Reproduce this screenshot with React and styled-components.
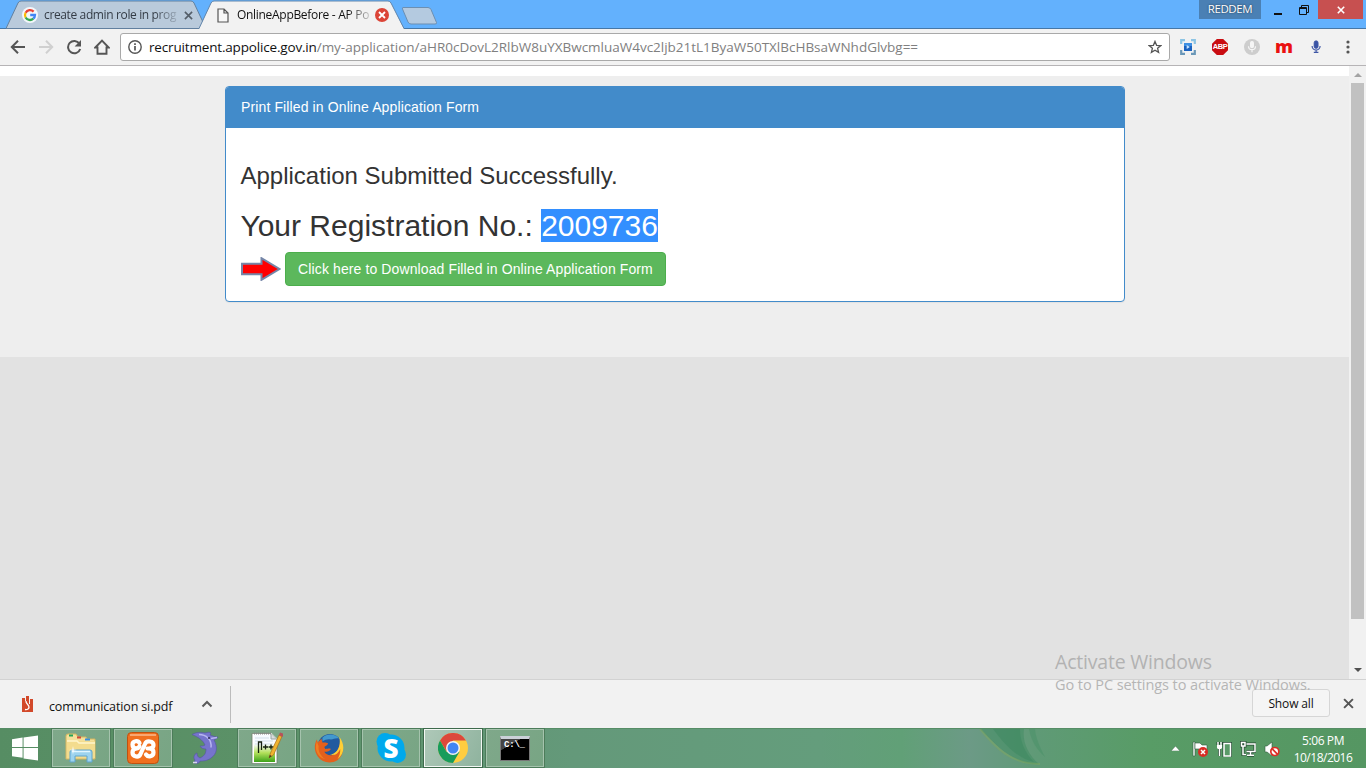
import React from "react";
import styled, { createGlobalStyle, css } from "styled-components";

const Global = createGlobalStyle`
  * { box-sizing: border-box; }
  html, body { margin: 0; padding: 0; overflow: hidden; }
  svg { display: block; flex: none; }
`;

const ui = `"Open Sans", "Noto Sans", sans-serif`;
const page = `"Liberation Sans", Arial, sans-serif`;

const Desktop = styled.div`
  position: relative;
  display: flex;
  flex-direction: column;
  width: 1366px;
  height: 768px;
  overflow: hidden;
  background: #f2f2f2;
  font-family: ${ui};
`;

const Label = styled.span`
  font-size: ${(p) => p.$size}px;
  letter-spacing: ${(p) => p.$track || 0}px;
  color: ${(p) => p.$color || "#111"};
  white-space: nowrap;
`;

/* ---------- tab strip ---------- */
const TabStrip = styled.header`
  display: flex;
  flex: none;
  height: 29px;
  padding-left: 6px;
  background: #63b1fd;
  border-bottom: 1px solid #4677a6;
`;

const Tab = styled.div`
  position: relative;
  display: flex;
  align-items: center;
  width: ${(p) => p.$w}px;
  height: 29px;
  margin-left: ${(p) => p.$overlap || 0}px;
  padding: 1px 0 0 16px;
`;

const TabShape = styled.svg`
  position: absolute;
  left: 0;
  top: 0;
`;

const TabIcon = styled.div`
  position: relative;
  display: flex;
  justify-content: center;
  width: 16px;
`;

const TabTitle = styled.div`
  position: relative;
  width: 134px;
  margin-left: 6px;
  line-height: 20px;
  display: flex;
  mask-image: linear-gradient(90deg, #000 82%, rgba(0, 0, 0, 0.15) 100%);
`;

const TabClose = styled.div`
  position: relative;
  margin-left: ${(p) => p.$gap}px;
`;

const NewTab = styled.div`
  padding: 7px 0 0;
  margin-left: 1px;
`;

const WindowControls = styled.div`
  display: flex;
  margin-left: auto;
  margin-right: 3px;
  height: 19px;
`;

const UserBadge = styled.div`
  width: 62px;
  height: 19px;
  background: #4a80b4;
  display: flex;
  justify-content: center;
  line-height: 18px;
  text-shadow: 0 0 2px #234;
`;

const ControlButton = styled.div`
  display: flex;
  align-items: center;
  justify-content: center;
  width: ${(p) => p.$w}px;
  height: 19px;
  background: ${(p) => p.$bg || "transparent"};
`;

/* ---------- toolbar ---------- */
const Toolbar = styled.nav`
  display: flex;
  flex: none;
  align-items: center;
  height: 37px;
  padding: 0 7px 0 10px;
  background: #f2f2f2;
  border-bottom: 1px solid #b6b4b6;
`;

const NavButtons = styled.div`
  display: flex;
  gap: 12px;
  width: 110px;
`;

const AddressBar = styled.div`
  display: flex;
  align-items: center;
  width: 1050px;
  height: 28px;
  padding: 0 7px;
  background: #fff;
  border: 1px solid #a9a9a9;
  border-radius: 3px;
`;

const UrlText = styled.div`
  flex: 1;
  display: flex;
  margin-left: 7px;
  line-height: 24px;
`;

const Extensions = styled.div`
  display: flex;
  align-items: center;
  gap: 16px;
  margin-left: 10px;
`;

const MenuButton = styled.div`
  margin-left: auto;
  margin-right: 9px;
`;

/* ---------- page ---------- */
const Viewport = styled.main`
  display: flex;
  flex: none;
  height: 613px;
`;

const PageBody = styled.div`
  width: 1349px;
  background: #e2e2e2;
  font-family: ${page};
`;

const TopStrip = styled.div`
  height: 10px;
  background: #fff;
`;

const Content = styled.section`
  height: 281px;
  padding: 10px 0 0 225px;
  background: #eee;
`;

const Panel = styled.div`
  width: 900px;
  height: 216px;
  background: #fff;
  border: 1px solid #428bca;
  border-radius: 4px;
  overflow: hidden;
  box-shadow: 0 1px 1px rgba(0, 0, 0, 0.05);
`;

const PanelHeading = styled.div`
  height: 41px;
  padding: 10px 15px;
  background: #428bca;
  color: #fff;
  font-size: 14px;
  letter-spacing: 0.12px;
  line-height: 20px;
`;

const PanelBody = styled.div`
  padding: 35px 15px 0;
  color: #333;
`;

const Status = styled.h3`
  margin: 0 0 0 -0.5px;
  font-size: 24px;
  line-height: 26px;
  font-weight: 400;
`;

const Registration = styled.h2`
  margin: 20px 0 0 -0.6px;
  font-size: 30px;
  line-height: 33px;
  font-weight: 400;
`;

const Selected = styled.span`
  display: inline-block;
  height: 33px;
  background: #338fff;
  color: #fff;
`;

const DownloadRow = styled.div`
  display: flex;
  align-items: center;
  gap: 4px;
  margin-top: 10px;
`;

const DownloadButton = styled.button`
  width: 381px;
  height: 34px;
  padding: 0;
  border: 1px solid #4cae4c;
  border-radius: 4px;
  background: #5cb85c;
  color: #fff;
  font: 14px/20px ${page};
  letter-spacing: 0.11px;
`;

const Scrollbar = styled.div`
  display: flex;
  flex-direction: column;
  align-items: center;
  justify-content: space-between;
  width: 17px;
  padding: 7px 0 7px;
  background: #f1f1f1;
`;

const ScrollThumb = styled.div`
  width: 13px;
  height: 536px;
  margin: 6px 0 auto;
  background: #c1c1c1;
`;

/* ---------- download shelf ---------- */
const Shelf = styled.footer`
  display: flex;
  flex: none;
  align-items: center;
  height: 49px;
  padding-left: 21px;
  border-top: 1px solid #d2d2d2;
  background: #f2f2f2;
`;

const ShelfItem = styled.div`
  display: flex;
  align-items: center;
  width: 210px;
  height: 37px;
  border-right: 1px solid #bcbcbc;
`;

const FileName = styled.div`
  display: flex;
  width: 167px;
  padding: 4px 0 0 15px;
`;

const ShowAll = styled.div`
  display: flex;
  align-items: center;
  justify-content: center;
  width: 78px;
  height: 28px;
  margin: -2px 13px 0 auto;
  border: 1px solid #d6d6d6;
  border-radius: 3px;
  background: #f5f5f5;
`;

const ShelfClose = styled.div`
  margin: 0 12px 2px 0;
`;

/* ---------- taskbar ---------- */
const Taskbar = styled.footer`
  position: relative;
  display: flex;
  flex: none;
  height: 40px;
  border-top: 1px solid #568d66;
  background: linear-gradient(90deg, #568d63 0%, #5b9167 18%, #64997a 42%, #649d7c 60%, #61a077 66%, #6c9a86 71%, #5f9a76 76%, #589c66 84%, #559662 100%);
`;

const Leaf = styled.svg`
  position: absolute;
  left: 965px;
  top: 0;
`;

const StartButton = styled.div`
  width: 51px;
  padding: 6px 0 0 12px;
`;

const frame = {
  plain: css`
    border: 1px solid #a5c3ad;
    background: linear-gradient(115deg, #7fa88a, #78a584);
    box-shadow: 0 0 0 1px #4c7c5a;
  `,
  active: css`
    border: 1px solid #f2f7f3;
    background: linear-gradient(115deg, #aec8b8, #8fb39e);
    box-shadow: 0 0 0 1px #3e6a4c;
  `,
  none: css`
    border: 1px solid transparent;
  `,
};

const TaskButton = styled.div`
  display: flex;
  align-items: center;
  justify-content: center;
  width: 58px;
  height: 38px;
  margin: 0 3px 0 1px;
  ${(p) => frame[p.$frame || "plain"]}
`;

const Tray = styled.div`
  display: flex;
  align-items: center;
  margin-left: auto;
  gap: 8px;
`;

const TrayArrow = styled.div`
  margin-right: 4px;
`;

const Clock = styled.div`
  display: flex;
  flex-direction: column;
  align-items: center;
  width: 72px;
  margin-left: -1px;
  margin-right: 7px;
  padding-top: 1px;
  line-height: 17px;
`;

const Watermark = styled.div`
  position: absolute;
  left: 1055px;
  top: 650px;
  display: flex;
  flex-direction: column;
`;

const WatermarkLine = styled.div`
  height: ${(p) => p.$h}px;
  line-height: ${(p) => p.$h}px;
`;

/* ---------- drawings ---------- */
const GoogleIcon = () => (
  <svg width="16" height="16" viewBox="0 0 16 16" fill="none" strokeWidth="2.3">
    <circle cx="8" cy="8" r="8" fill="#f4f7fa" />
    <path d="M11.6 4.6A5 5 0 0 0 3.6 5.7" stroke="#ea4335" />
    <path d="M3.6 5.7a5 5 0 0 0 0 4.8" stroke="#fbbc05" />
    <path d="M3.6 10.5a5 5 0 0 0 7.7 1.2" stroke="#34a853" />
    <path d="M11.3 11.7A5 5 0 0 0 13 8H8.2" stroke="#4285f4" />
  </svg>
);

const CrossIcon = ({ size, color, width }) => (
  <svg width={size} height={size} viewBox="0 0 10 10" stroke={color} strokeWidth={width}>
    <path d="M1 1 9 9M9 1 1 9" />
  </svg>
);

const PageIcon = () => (
  <svg width="12" height="15" viewBox="0 0 12 15" fill="#f8f8f8" stroke="#555" strokeWidth="1.2">
    <path d="M1 1h6l4 4v9H1zM7 1v4h4" />
  </svg>
);

const RedCloseIcon = () => (
  <svg width="14" height="14" viewBox="0 0 14 14">
    <circle cx="7" cy="7" r="7" fill="#db4437" />
    <path d="m4 4 6 6m0-6-6 6" stroke="#fff" strokeWidth="1.8" />
  </svg>
);

const ArrowIcon = ({ color, flip }) => (
  <svg width="16" height="16" viewBox="0 0 16 16" fill="none" stroke={color} strokeWidth="2">
    <path d={flip ? "M1 8h13M8 1.8 14.2 8 8 14.2" : "M15 8H2M8 1.8 1.8 8 8 14.2"} />
  </svg>
);

const ReloadIcon = () => (
  <svg width="16" height="16" viewBox="0 0 16 16">
    <path d="M13.4 4.6A6.2 6.2 0 1 0 14.2 10" fill="none" stroke="#555" strokeWidth="2" />
    <path d="M15 1v6.6H8.6z" fill="#555" />
  </svg>
);

const HomeIcon = () => (
  <svg width="16" height="16" viewBox="0 0 16 16" fill="none" stroke="#555" strokeWidth="1.9">
    <path d="M1.300 8.500 8 1.700l6.700 6.800h-2.200v6.300h-9V8.500z" />
  </svg>
);

const InfoIcon = () => (
  <svg width="14" height="14" viewBox="0 0 14 14">
    <circle cx="7" cy="7" r="6.2" fill="none" stroke="#555" strokeWidth="1.4" />
    <path d="M7 6v4.6M7 3.2v1.7" stroke="#555" strokeWidth="1.7" />
  </svg>
);

const StarIcon = () => (
  <svg width="14" height="14" viewBox="0 0 14 14" fill="none" stroke="#555" strokeWidth="1.3">
    <path d="m7 1.4 1.6 3.9 4.2.3-3.2 2.7 1 4.1L7 10.2l-3.6 2.2 1-4.1L1.2 5.6l4.2-.3z" />
  </svg>
);

const CaptureIcon = () => (
  <svg width="16" height="16" viewBox="0 0 16 16">
    <path d="M1.2 5V1.2H5M11 1.2h3.8V5" fill="none" stroke="#8cc4e4" strokeWidth="2.2" />
    <path d="M1.2 11v3.8H5M11 14.8h3.8V11" fill="none" stroke="#6b98b8" strokeWidth="2.2" />
    <rect x="4" y="4" width="8" height="8" fill="#1a62c0" />
    <rect x="4" y="4" width="8" height="3" fill="#3f90e2" />
    <path d="m6.7 6 3.2 2-3.2 2z" fill="#c6e4ff" />
  </svg>
);

const AbpShape = styled.div`
  display: flex;
  align-items: center;
  justify-content: center;
  width: 16px;
  height: 16px;
  background: #c90d12;
  color: #fff;
  font: 700 7.5px/16px "Liberation Sans", sans-serif;
  letter-spacing: -0.4px;
  clip-path: polygon(30% 0, 70% 0, 100% 30%, 100% 70%, 70% 100%, 30% 100%, 0 70%, 0 30%);
`;

const MicGlyph = ({ color }) => (
  <g fill="none" stroke={color} strokeWidth="1.2">
    <rect x="6.6" y="2.6" width="2.8" height="6" rx="1.4" fill={color} />
    <path d="M4.5 7.2a3.5 3.5 0 0 0 7 0M8 10.7v2.5" />
  </g>
);

const GreyMicIcon = () => (
  <svg width="16" height="16" viewBox="0 0 16 16">
    <circle cx="8" cy="8" r="8" fill="#cdcdcd" />
    <MicGlyph color="#f5f5f5" />
  </svg>
);

const BlueMicIcon = () => (
  <svg width="16" height="16" viewBox="0 0 16 16" fill="none" stroke="#3f57a6">
    <rect x="6.100" y="1.800" width="4" height="7.600" rx="2" fill="#3a53a5" strokeWidth="0.8" />
    <path d="M4.1 7a4 4 0 0 0 8 0M8.1 11v2.6M5.8 13.4h4.6" strokeWidth="1.2" />
  </svg>
);

const MLogo = styled.span`
  display: block;
  width: 16px;
  height: 16px;
  color: #ea1111;
  font: 800 18px/15px "Open Sans", sans-serif;
  text-indent: -1px;
`;

const MenuIcon = () => (
  <svg width="4" height="14" viewBox="0 0 4 14" fill="#555">
    <circle cx="2" cy="2" r="1.6" />
    <circle cx="2" cy="7" r="1.6" />
    <circle cx="2" cy="12" r="1.6" />
  </svg>
);

const PointerArrow = () => (
  <svg width="40" height="24" viewBox="0 0 40 24">
    <path d="M1 6.700h19.500V1.200L38.500 12 20.500 22.800v-5.500H1z" fill="#f00" stroke="#7586a8" strokeWidth="2" />
  </svg>
);

const PdfIcon = () => (
  <svg width="13" height="18" viewBox="0 0 13 18">
    <path d="M1 3h3v3h1V1h3v8h1V4h3v13H1z" fill="#d2492a" />
    <path d="M5 6c-.5 3 3.500 3.500 3 6.500-.3 1.500-2 2.500-4 2" fill="none" stroke="#fff" strokeWidth="1.3" />
  </svg>
);

const ChevronUp = () => (
  <svg width="12" height="8" viewBox="0 0 12 8" fill="none" stroke="#5b5b5b" strokeWidth="2">
    <path d="m1.500 6.500 4.500-4.500 4.500 4.500" />
  </svg>
);

const WindowsIcon = () => (
  <svg width="26" height="26" viewBox="0 0 27 26" fill="#fff">
    <path d="M0 4 11 2.200V12H0zM12 2 27 0v12H12zM0 13h11v10L0 21.500zM12 13h15v13l-15-2z" />
  </svg>
);

const ExplorerIcon = () => (
  <svg width="32" height="30" viewBox="0 0 32 30">
    <path d="M1 3q0-2 2-2h8l2 3h8l1 2h8v20H1z" fill="#f5e09a" stroke="#d5b55e" />
    <path d="M4 1.500h4v2H4z" fill="#22a45a" />
    <path d="M12 3.500h4v2h-4z" fill="#d24a38" />
    <path d="M20 5.500h5v2h-5z" fill="#3b8fdd" />
    <path d="M2 8h28v17H2z" fill="#f3dc8e" />
    <path d="M2 8h10l2 2h16" fill="none" stroke="#fff5cb" strokeWidth="1.500" />
    <path d="M5 29V19q0-2 2-2h18q2 0 2 2v10h-5v-6H10v6z" fill="#9dd3ee" stroke="#5ea4cd" />
    <path d="M7 18.500h18" stroke="#e2f6ff" strokeWidth="1.500" />
    <path d="m8 13 .6 3.400L12 17l-3.400.6L8 22l-.6-4.400L4 17l3.400-.6z" fill="#fff" />
  </svg>
);

const XamppIcon = () => (
  <svg width="32" height="32" viewBox="0 0 32 32">
    <rect x="0.500" y="0.500" width="31" height="31" rx="4" fill="#f0701f" stroke="#bf5210" />
    <path d="M3 2h26v2H3z" fill="#f8a872" />
    <g fill="none" stroke="#fff" strokeWidth="4.200" strokeLinecap="round" strokeLinejoin="round">
      <path d="M12.500 11c-1.500-3-7-2-7 1.500 0 2 1 3.500 3 4-2 .7-3 2-3 4 0 4.500 6.500 5.500 8 1.500l4.500-10c1.500-4 8.500-3 8.500 1 0 2-1 3-3 3.500h-3" />
      <path d="M23.500 16.500c2 .5 3 2 3 4 0 4-5.500 5-7.500 2M8.500 16.500c2 0 3-.5 4-2" />
    </g>
  </svg>
);

const DolphinIcon = () => (
  <svg width="30" height="34" viewBox="0 0 30 34">
    <path d="M2 3.500C6 1 11 1 15 2c3-1 5-1 6 0l-1 2c3 1 5 2 8 2-1 2-3 2.500-4 3 4 7 3 14-3 18-4 3-8 3-11 3 0 2-3 3-6 2l1-3c-2-2-1-6 2-7 0 3 1 4 3 5 4-2 6-4 6-9-3 0-5-1-6-3 2 0 4 0 5-1C13 9 8 6 2 3.500z" fill="#7674cc" stroke="#5654a4" strokeWidth="0.600" />
    <path d="M9 3.500c7 0 13 5 12 13M21 7.500c3-.5 4-.5 6-1" fill="none" stroke="#b7b5f0" strokeWidth="1.500" />
    <circle cx="19" cy="7" r="0.900" fill="#24234f" />
    <path d="M3 31.500h4" stroke="#d8d8ec" strokeWidth="1.500" />
  </svg>
);

const NotepadIcon = () => (
  <svg width="32" height="32" viewBox="0 0 32 32">
    <defs>
      <linearGradient id="notepadGreen" x2="0" y2="1">
        <stop offset="0.350" stopColor="#f8fbff" />
        <stop offset="0.650" stopColor="#b3e05a" />
        <stop offset="1" stopColor="#2f9c12" />
      </linearGradient>
    </defs>
    <path d="M2 2h18l5 5v24H2z" fill="url(#notepadGreen)" stroke="#fff" strokeWidth="2" />
    <path d="M1 1.500h19l6 6V31.500H1z" fill="none" stroke="#6f7f6a" strokeWidth="0.800" />
    <path d="M3 1.500h18" stroke="#888" strokeWidth="2" strokeDasharray="1 1" />
    <path d="M20 2v5h5" fill="#d9dde0" stroke="#9ba4a2" />
    <path d="M4 6h14M4 9h18M4 12h18" stroke="#d3dfea" />
    <path d="M7.500 21V10h3v8M12 15h5m-2.500-2.500v5M17.500 15h5M20 12.500v5" fill="none" stroke="#152010" strokeWidth="1.300" />
    <path d="m18 26 1.500-5L28 3l3 1.500L22.500 23z" fill="#f0b431" stroke="#a76d1c" strokeWidth="0.700" />
    <path d="m28 3 1-2.500 3 1V4.500l-1 .3z" fill="#b65359" />
    <path d="m18 26 .8-3 2 1z" fill="#332" />
  </svg>
);

const FirefoxIcon = () => (
  <svg width="30" height="30" viewBox="0 0 32 32">
    <circle cx="17" cy="14" r="13" fill="#225a9f" />
    <path d="M9 5c5-5 14-4 18 1-4-1-6 1-9 1-3-1-6 0-9 2z" fill="#4399ce" />
    <path d="M28 8c4 7 4 16-3 21-7 4-16 3-21-4C0 20 0 12 3 7l1 3 4-4 1 4c2 0 5 0 6 1 0 2-3 3-4 4l1 2c3 0 4-1 6 0-2 3-5 3-7 3 2 4 8 5 11 2 4-4 6-9 6-14z" fill="#e4601c" />
    <path d="M27 4c6 8 6 18-2 24 3-5 3-8 3-11-3 6-6 7-11 6 8-1 12-9 10-19z" fill="#ffcf35" />
    <path d="M3 9c-3 9 1 17 9 19-5-4-8-9-7-14z" fill="#f07f22" />
  </svg>
);

const SkypeBadge = styled.div`
  display: flex;
  align-items: center;
  justify-content: center;
  position: relative;
  width: 30px;
  height: 30px;
  color: #fff;
  font: 800 26px/30px "Open Sans", sans-serif;
`;

const SkypeShape = styled.svg`
  position: absolute;
  inset: 0;
`;

const Glyph = styled.span`
  position: relative;
`;

const ShelfChevron = styled.div`
  margin-bottom: 1px;
`;

const SkypeIcon = () => (
  <SkypeBadge>
    <SkypeShape width="30" height="30" viewBox="0 0 30 30" fill="#00a9ec">
      <circle cx="15" cy="15" r="13.500" />
      <circle cx="9" cy="8.500" r="8.500" />
      <circle cx="21.500" cy="21.500" r="8.500" />
    </SkypeShape>
    <Glyph>S</Glyph>
  </SkypeBadge>
);

const ChromeIcon = () => (
  <svg width="30" height="30" viewBox="0 0 30 30">
    <circle cx="15" cy="15" r="15" fill="#ffcd40" />
    <path d="M2 7.500A15 15 0 0 1 28 7.500H15l-6.500 11z" fill="#dc483c" />
    <path d="M2 7.500A15 15 0 0 0 15 30l6.500-11.200H8.500z" fill="#179c5b" />
    <circle cx="15" cy="15" r="7" fill="#f3f3f3" />
    <circle cx="15" cy="15" r="5.500" fill="#4285f4" />
  </svg>
);

const TerminalBox = styled.div`
  width: 30px;
  height: 25px;
  border: 1px solid #777;
  border-top: 3px solid #cbd0d7;
  background: linear-gradient(150deg, #444 0 30%, #000 31%);
  color: #fff;
  font: 700 9px/11px "Liberation Mono", monospace;
  letter-spacing: -0.2px;
  padding: 1px 0 0 3px;
  white-space: nowrap;
`;

const TrayUp = () => (
  <svg width="9" height="5" viewBox="0 0 9 5"><path d="M0 5 4.500 0 9 5z" fill="#fff" stroke="#426f4e" strokeWidth="0.500" /></svg>
);

const FlagIcon = () => (
  <svg width="16" height="16" viewBox="0 0 16 16">
    <path d="M1 1h2v14H1z" fill="#fff" stroke="#315b3d" strokeWidth="0.600" />
    <path d="M3 2h5l2 2h5v6H9L7 8H3z" fill="#fff" stroke="#315b3d" strokeWidth="0.600" />
    <circle cx="11" cy="11" r="5" fill="#d92d26" />
    <path d="m9 9 4 4m0-4-4 4" stroke="#fff" strokeWidth="1.500" />
  </svg>
);

const BatteryIcon = () => (
  <svg width="16" height="16" viewBox="0 0 16 16" fill="none">
    <path d="M8 2.500h6.500v12.500H8zM3.500 8v7M2 1v3M5 1v3" stroke="#234a30" strokeWidth="3" />
    <path d="M8 2.500h6.500v12.500H8z" fill="#5a9a68" />
    <path d="M8 2.500h6.500v12.500H8zM2 1v3M5 1v3M3.500 8v7" stroke="#fff" strokeWidth="1.500" />
    <path d="M1 4h5v3L5 8H2L1 7z" fill="#fff" />
  </svg>
);

const NetworkIcon = () => (
  <svg width="16" height="16" viewBox="0 0 16 16" fill="none">
    <g stroke="#234a30" strokeWidth="3">
      <path d="M6.500 3H15v7.500H6.500M10.500 10.500V14M7 14.300h7" />
      <path d="M1.500 1.500H5v3.500H1.500zM3 5v8.500h3" />
    </g>
    <g stroke="#fff" strokeWidth="1.500">
      <path d="M6.500 3H15v7.500H6.500M10.500 10.500V14M7 14.300h7" />
      <path d="M1.500 1.500H5v3.500H1.500zM3 5v8.500h3" />
    </g>
  </svg>
);

const VolumeIcon = () => (
  <svg width="16" height="16" viewBox="0 0 16 16">
    <path d="M1 5h2l5-4v14l-5-4H1z" fill="#fff" stroke="#315b3d" strokeWidth="0.600" />
    <circle cx="10.800" cy="10.500" r="4" fill="#fff" stroke="#dc2d24" strokeWidth="1.700" />
    <path d="m8 7.700 5.600 5.600" stroke="#dc2d24" strokeWidth="1.700" />
  </svg>
);

export default function App() {
  return (
    <Desktop>
      <Global />
      <TabStrip>
        <Tab $w={199}>
          <TabShape width="206" height="29">
            <path d="M0 28.500 12 3q1-2 3-2h170q2 0 3 2l12 25.500z" fill="#b9cadb" stroke="#62809f" />
          </TabShape>
          <TabIcon><GoogleIcon /></TabIcon>
          <TabTitle><Label $size={12} $track={-0.37} $color="#343c46">create admin role in prog</Label></TabTitle>
          <TabClose $gap={6}><CrossIcon size={9} color="#545e69" width={1.8} /></TabClose>
        </Tab>
        <Tab $w={200} $overlap={-6}>
          <TabShape width="206" height="29">
            <path d="M0 29 12 3q1-2 3-2h174q2 0 3 2l13 26z" fill="#f2f2f2" />
            <path d="M0 28.500 12 3q1-2 3-2h174q2 0 3 2l13 25.500" fill="none" stroke="#6386ab" />
          </TabShape>
          <TabIcon><PageIcon /></TabIcon>
          <TabTitle><Label $size={12} $track={-0.3}>OnlineAppBefore - AP Po</Label></TabTitle>
          <TabClose $gap={4}><RedCloseIcon /></TabClose>
        </Tab>
        <NewTab>
          <svg width="38" height="18" viewBox="0 0 38 18">
            <path d="M3 .5h25q2 0 3 2l5.500 13q.5 1.500-1.500 1.500H11q-2 0-3-2L2.500 2Q2 .5 3 .5z" fill="#b4cae0" stroke="#6c8fb2" />
          </svg>
        </NewTab>
        <WindowControls>
          <UserBadge><Label $size={11.5} $track={-0.4} $color="#fff">REDDEM</Label></UserBadge>
          <ControlButton $w={33}><svg width="8" height="12"><path d="M0 9h8v2H0z" fill="#111" /></svg></ControlButton>
          <ControlButton $w={19}>
            <svg width="10" height="10" viewBox="0 0 10 10" fill="none" stroke="#111">
              <path d="M2.500 2V.5h7v7H8M.5 2.500h7v7h-7zM.5 3.500h7" />
            </svg>
          </ControlButton>
          <ControlButton $w={5} />
          <ControlButton $w={45} $bg="#c75050"><CrossIcon size={8} color="#fff" width={2} /></ControlButton>
        </WindowControls>
      </TabStrip>

      <Toolbar>
        <NavButtons>
          <ArrowIcon color="#555" />
          <ArrowIcon color="#d0d0d0" flip />
          <ReloadIcon />
          <HomeIcon />
        </NavButtons>
        <AddressBar>
          <InfoIcon />
          <UrlText>
            <Label $size={13.5} $track={-0.17}>recruitment.appolice.gov.in</Label>
            <Label $size={13.5} $track={-0.01} $color="#808080">/my-application/aHR0cDovL2RlbW8uYXBwcmluaW4vc2ljb21tL1ByaW50TXlBcHBsaWNhdGlvbg==</Label>
          </UrlText>
          <StarIcon />
        </AddressBar>
        <Extensions>
          <CaptureIcon />
          <AbpShape>ABP</AbpShape>
          <GreyMicIcon />
          <MLogo>m</MLogo>
          <BlueMicIcon />
        </Extensions>
        <MenuButton><MenuIcon /></MenuButton>
      </Toolbar>

      <Viewport>
        <PageBody>
          <TopStrip />
          <Content>
            <Panel>
              <PanelHeading>Print Filled in Online Application Form</PanelHeading>
              <PanelBody>
                <Status>Application Submitted Successfully.</Status>
                <Registration>Your Registration No.: <Selected>2009736</Selected></Registration>
                <DownloadRow>
                  <PointerArrow />
                  <DownloadButton>Click here to Download Filled in Online Application Form</DownloadButton>
                </DownloadRow>
              </PanelBody>
            </Panel>
          </Content>
        </PageBody>
        <Scrollbar>
          <svg width="8" height="4"><path d="M0 4 4 0l4 4z" fill="#a3a3a3" /></svg>
          <ScrollThumb />
          <svg width="8" height="4"><path d="M0 0h8L4 4z" fill="#505050" /></svg>
        </Scrollbar>
      </Viewport>

      <Shelf>
        <ShelfItem>
          <PdfIcon />
          <FileName><Label $size={12.5} $track={-0.13}>communication si.pdf</Label></FileName>
          <ShelfChevron><ChevronUp /></ShelfChevron>
        </ShelfItem>
        <ShowAll><Label $size={12} $track={-0.15}>Show all</Label></ShowAll>
        <ShelfClose><CrossIcon size={11} color="#555" width={1.8} /></ShelfClose>
      </Shelf>

      <Taskbar>
        <Leaf width="100" height="39">
          <path d="M15 0h44c-2 12 4 26 15 35C52 36 35 21 15 0z" fill="#3f8c62" opacity="0.500" />
          <path d="M28 0h27c0 12 5 24 14 33C52 29 40 16 28 0z" fill="#338458" opacity="0.350" />
          <path d="M64 0h6c1 10 5 18 10 28-8-7-14-16-16-28z" fill="#3f8c62" opacity="0.350" />
          <path d="M15 0c16 19 31 35 60 35" fill="none" stroke="#7fa85e" strokeWidth="2" opacity="0.500" />
        </Leaf>
        <StartButton><WindowsIcon /></StartButton>
        <TaskButton><ExplorerIcon /></TaskButton>
        <TaskButton><XamppIcon /></TaskButton>
        <TaskButton $frame="none"><DolphinIcon /></TaskButton>
        <TaskButton><NotepadIcon /></TaskButton>
        <TaskButton><FirefoxIcon /></TaskButton>
        <TaskButton><SkypeIcon /></TaskButton>
        <TaskButton $frame="active"><ChromeIcon /></TaskButton>
        <TaskButton><TerminalBox>C:\_</TerminalBox></TaskButton>
        <Tray>
          <TrayArrow><TrayUp /></TrayArrow>
          <FlagIcon />
          <BatteryIcon />
          <NetworkIcon />
          <VolumeIcon />
          <Clock>
            <Label $size={12} $track={-0.4} $color="#fff">5:06 PM</Label>
            <Label $size={12} $track={-0.5} $color="#fff">10/18/2016</Label>
          </Clock>
        </Tray>
      </Taskbar>

      <Watermark>
        <WatermarkLine $h={24}><Label $size={19.5} $track={-0.2} $color="#b2b2b2">Activate Windows</Label></WatermarkLine>
        <WatermarkLine $h={20}><Label $size={14.5} $track={-0.07} $color="#b5b5b5">Go to PC settings to activate Windows.</Label></WatermarkLine>
      </Watermark>
    </Desktop>
  );
}
